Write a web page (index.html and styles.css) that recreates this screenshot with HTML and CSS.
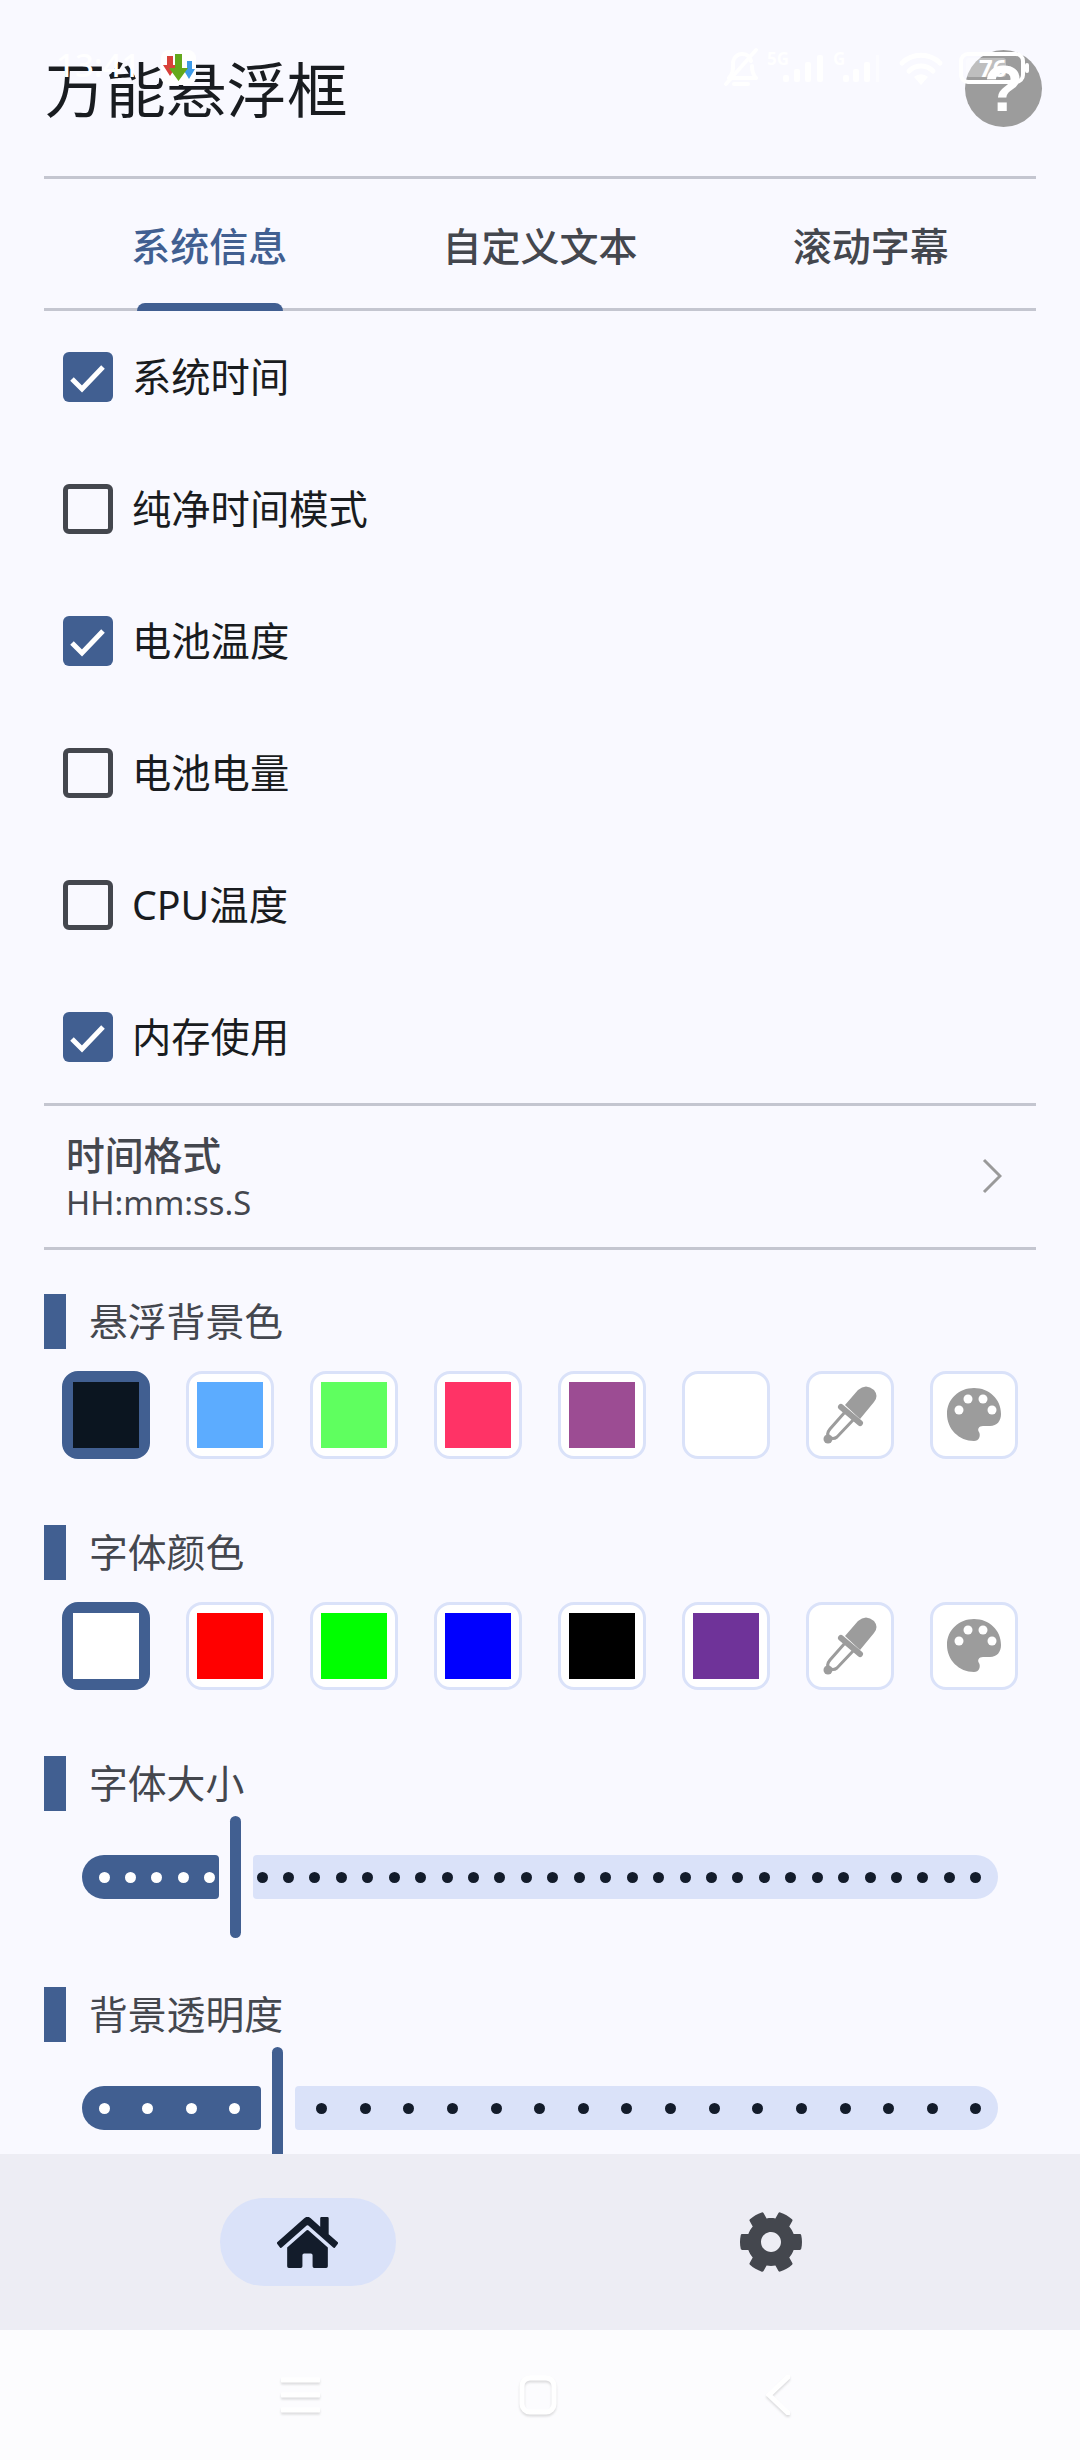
FILE: index.html
```html
<!DOCTYPE html>
<html lang="zh-CN">
<head>
  <meta charset="UTF-8">
  <meta name="viewport" content="width=device-width, initial-scale=1.0">
  <title>万能悬浮框</title>
  <link rel="stylesheet" href="styles.css">
</head>
<body>
  <div class="app">
    <!-- transparent system status bar, drawn over the app -->
    <div class="statusbar">
      <span class="status-time">13:41</span>
      <svg class="status-notif" viewBox="0 0 35 35">
        <rect width="35" height="35" rx="8" fill="#fff"/>
        <polygon points="6,6 12,6 12,15 16,15 9,26 2,15 6,15" fill="#d8423a"/>
        <polygon points="26,11 31,11 31,19 34,19 28,29 22,19 26,19" fill="#3d9be9"/>
        <polygon points="14,4 21,4 21,18 27,18 17.5,31 8,18 14,18" fill="#64a91c"/>
      </svg>
      <svg class="status-icons" viewBox="720 45 320 50">
        <g fill="none" stroke="#fff" stroke-width="4" stroke-linecap="round" stroke-linejoin="round">
          <path d="M729 78c4-4 4-8 4-14 0-6 4-10 9-10s8 3 9 7M752 66c0 6 1 9 4 12H729"/>
          <path d="M734 84h14M756 50l-30 34"/>
        </g>
        <g fill="#fff">
          <text class="status-net" x="767" y="65">5G</text>
          <rect x="783" y="75" width="6" height="7" rx="2"/>
          <rect x="794" y="69" width="6" height="13" rx="2"/>
          <rect x="805" y="62" width="6" height="20" rx="2"/>
          <rect x="817" y="55" width="6" height="27" rx="2"/>
          <text class="status-net" x="833" y="65">G</text>
          <rect x="843" y="75" width="6" height="7" rx="2"/>
          <rect x="853" y="69" width="6" height="13" rx="2"/>
          <rect x="864" y="62" width="6" height="20" rx="2"/>
          <rect x="876" y="55" width="3" height="27" opacity=".5"/>
          <path d="M921 85l-7-8a10 10 0 0 1 14 0z"/>
          <rect x="966" y="58" width="40" height="19" rx="3" opacity=".35"/>
          <rect x="1025" y="63" width="4" height="10" rx="2"/>
          <text class="status-batt" x="979" y="77">76</text>
        </g>
        <g fill="none" stroke="#fff" stroke-width="5" stroke-linecap="round">
          <path d="M902 63a27 27 0 0 1 38 0"/>
          <path d="M909 71a17 17 0 0 1 24 0"/>
        </g>
        <rect x="961" y="54" width="62" height="28" rx="7" fill="none" stroke="#fff" stroke-width="4"/>
      </svg>
    </div>

    <main class="content">
      <header class="topbar">
        <h1 class="title">万能悬浮框</h1>
        <button class="help">?</button>
      </header>

      <nav class="tabs">
        <div class="tab active">系统信息</div>
        <div class="tab">自定义文本</div>
        <div class="tab">滚动字幕</div>
      </nav>

      <div class="checks">
        <div class="check-row">
          <span class="box on"><svg viewBox="0 0 50 50"><path d="M9 27l10 10 21-22"/></svg></span>
          <span class="check-label">系统时间</span>
        </div>
        <div class="check-row">
          <span class="box"></span>
          <span class="check-label">纯净时间模式</span>
        </div>
        <div class="check-row">
          <span class="box on"><svg viewBox="0 0 50 50"><path d="M9 27l10 10 21-22"/></svg></span>
          <span class="check-label">电池温度</span>
        </div>
        <div class="check-row">
          <span class="box"></span>
          <span class="check-label">电池电量</span>
        </div>
        <div class="check-row">
          <span class="box"></span>
          <span class="check-label">CPU温度</span>
        </div>
        <div class="check-row">
          <span class="box on"><svg viewBox="0 0 50 50"><path d="M9 27l10 10 21-22"/></svg></span>
          <span class="check-label">内存使用</span>
        </div>
      </div>

      <div class="format-row">
        <div>
          <div class="format-name">时间格式</div>
          <div class="format-value">HH:mm:ss.S</div>
        </div>
        <svg class="chevron" viewBox="0 0 20 36"><path d="M2 2l16 16L2 34"/></svg>
      </div>

      <h2 class="section first">悬浮背景色</h2>
      <div class="swatches">
        <div class="swatch selected"><i class="c-ink"></i></div>
        <div class="swatch"><i class="c-sky"></i></div>
        <div class="swatch"><i class="c-mint"></i></div>
        <div class="swatch"><i class="c-rose"></i></div>
        <div class="swatch"><i class="c-plum"></i></div>
        <div class="swatch"><i class="c-white"></i></div>
        <div class="swatch">
          <svg class="tool-dropper" viewBox="0 0 54 58">
            <path class="solid" d="M22 19L35 4Q43-3 51 4Q56 10 51 16L37 33Z"/>
            <path class="collar" d="M18 21L37 37"/>
            <path class="tube" d="M22 26L7 43Q3 48 6 51Q10 54 14 51L31 33"/>
            <circle class="solid" cx="5" cy="53" r="4.5"/>
          </svg>
        </div>
        <div class="swatch">
          <svg class="tool-palette" viewBox="0 0 54 54">
            <path class="solid" d="M27 0C42 0 54 11 54 26C54 33 50 38 43 38H36C32 38 30 41 32 44C34 48 32 53 27 53C12 53 0 41 0 26C0 11 12 0 27 0Z"/>
            <circle class="hole" cx="12" cy="22" r="4.5"/>
            <circle class="hole" cx="21" cy="11" r="4.5"/>
            <circle class="hole" cx="36" cy="11" r="4.5"/>
            <circle class="hole" cx="45" cy="22" r="4.5"/>
          </svg>
        </div>
      </div>

      <h2 class="section">字体颜色</h2>
      <div class="swatches">
        <div class="swatch selected"><i class="c-white"></i></div>
        <div class="swatch"><i class="c-red"></i></div>
        <div class="swatch"><i class="c-lime"></i></div>
        <div class="swatch"><i class="c-blue"></i></div>
        <div class="swatch"><i class="c-black"></i></div>
        <div class="swatch"><i class="c-violet"></i></div>
        <div class="swatch">
          <svg class="tool-dropper" viewBox="0 0 54 58">
            <path class="solid" d="M22 19L35 4Q43-3 51 4Q56 10 51 16L37 33Z"/>
            <path class="collar" d="M18 21L37 37"/>
            <path class="tube" d="M22 26L7 43Q3 48 6 51Q10 54 14 51L31 33"/>
            <circle class="solid" cx="5" cy="53" r="4.5"/>
          </svg>
        </div>
        <div class="swatch">
          <svg class="tool-palette" viewBox="0 0 54 54">
            <path class="solid" d="M27 0C42 0 54 11 54 26C54 33 50 38 43 38H36C32 38 30 41 32 44C34 48 32 53 27 53C12 53 0 41 0 26C0 11 12 0 27 0Z"/>
            <circle class="hole" cx="12" cy="22" r="4.5"/>
            <circle class="hole" cx="21" cy="11" r="4.5"/>
            <circle class="hole" cx="36" cy="11" r="4.5"/>
            <circle class="hole" cx="45" cy="22" r="4.5"/>
          </svg>
        </div>
      </div>

      <h2 class="section">字体大小</h2>
      <div class="slider">
        <div class="track-on size-on">
          <b></b><b></b><b></b><b></b><b></b>
        </div>
        <div class="thumb"></div>
        <div class="track-off size-off">
          <b></b><b></b><b></b><b></b><b></b><b></b><b></b>
          <b></b><b></b><b></b><b></b><b></b><b></b><b></b>
          <b></b><b></b><b></b><b></b><b></b><b></b><b></b>
          <b></b><b></b><b></b><b></b><b></b><b></b><b></b>
        </div>
      </div>

      <h2 class="section after-slider">背景透明度</h2>
      <div class="slider">
        <div class="track-on alpha-on">
          <b></b><b></b><b></b><b></b>
        </div>
        <div class="thumb"></div>
        <div class="track-off alpha-off">
          <b></b><b></b><b></b><b></b><b></b><b></b><b></b><b></b>
          <b></b><b></b><b></b><b></b><b></b><b></b><b></b><b></b>
        </div>
      </div>
    </main>

    <nav class="bottomnav">
      <div class="nav-item">
        <div class="nav-pill">
          <svg class="nav-home" viewBox="0 32 576 448" preserveAspectRatio="none"><path d="M280.37 148.26L96 300.11V464a16 16 0 0 0 16 16l112.06-.29a16 16 0 0 0 15.92-16V368a16 16 0 0 1 16-16h64a16 16 0 0 1 16 16v95.64a16 16 0 0 0 16 16.05L464 480a16 16 0 0 0 16-16V300L295.67 148.26a12.19 12.19 0 0 0-15.3 0zM571.6 251.47L488 182.56V44.05a12 12 0 0 0-12-12h-56a12 12 0 0 0-12 12v72.61L318.47 43a48 48 0 0 0-61 0L4.34 251.47a12 12 0 0 0-1.6 16.9l25.5 31A12 12 0 0 0 45.15 301l235.22-193.74a12.19 12.19 0 0 1 15.3 0L530.9 301a12 12 0 0 0 16.9-1.6l25.5-31a12 12 0 0 0-1.7-16.93z"/></svg>
        </div>
      </div>
      <div class="nav-item">
        <svg class="nav-gear" viewBox="0 0 512 512"><path d="M487.4 315.7l-42.6-24.6c4.3-23.2 4.3-47 0-70.2l42.6-24.6c4.9-2.8 7.1-8.6 5.5-14-11.1-35.6-30-67.8-54.7-94.6-3.8-4.1-10-5.1-14.8-2.3L380.8 110c-17.9-15.4-38.5-27.3-60.8-35.1V25.8c0-5.6-3.9-10.5-9.4-11.7-36.7-8.2-74.3-7.8-109.2 0-5.5 1.2-9.4 6.1-9.4 11.7V75c-22.2 7.9-42.8 19.8-60.8 35.1L88.7 85.5c-4.9-2.8-11-1.9-14.8 2.3-24.7 26.7-43.6 58.9-54.7 94.6-1.7 5.4.6 11.2 5.5 14L67.3 221c-4.3 23.2-4.3 47 0 70.2l-42.6 24.6c-4.9 2.8-7.1 8.6-5.5 14 11.1 35.6 30 67.8 54.7 94.6 3.8 4.1 10 5.1 14.8 2.3l42.6-24.6c17.9 15.4 38.5 27.3 60.8 35.1v49.2c0 5.6 3.9 10.5 9.4 11.7 36.7 8.2 74.3 7.8 109.2 0 5.5-1.2 9.4-6.1 9.4-11.7v-49.2c22.2-7.9 42.8-19.8 60.8-35.1l42.6 24.6c4.9 2.8 11 1.9 14.8-2.3 24.7-26.7 43.6-58.9 54.7-94.6 1.5-5.5-.7-11.3-5.6-14.1zM256 336c-44.1 0-80-35.9-80-80s35.9-80 80-80 80 35.9 80 80-35.9 80-80 80z"/></svg>
      </div>
    </nav>

    <div class="sysnav">
      <svg class="sys-menu" viewBox="0 0 39 40"><path d="M1 5h37M1 20h37M1 35h37"/></svg>
      <svg class="sys-home" viewBox="0 0 38 40"><rect x="3" y="3" width="32" height="34" rx="8"/></svg>
      <svg class="sys-back" viewBox="0 0 24 40"><path d="M22 2L3 20l19 18"/></svg>
    </div>
  </div>
</body>
</html>
```

FILE: styles.css
```css
* {
  box-sizing: border-box;
}

body {
  margin: 0;
  background-color: #f9f9ff;
  font-family: "Noto Sans", "Noto Sans CJK SC", sans-serif;
  color: #191c20;
}

.app {
  position: relative;
  display: flex;
  flex-direction: column;
  width: 1080px;
  height: 2460px;
  overflow: hidden;
}

/* status bar */
.statusbar {
  position: absolute;
  top: 0;
  left: 0;
  z-index: 5;
  width: 100%;
  height: 100px;
}

.status-time {
  position: absolute;
  left: 56px;
  top: 46px;
  font-size: 33px;
  line-height: 38px;
  font-weight: 500;
  color: #fff;
}

.status-notif {
  position: absolute;
  left: 161px;
  top: 50px;
  width: 35px;
  height: 35px;
}

.status-icons {
  position: absolute;
  left: 720px;
  top: 45px;
  width: 320px;
  height: 50px;
}

.status-net {
  font-size: 17px;
  font-weight: 700;
}

.status-batt {
  font-size: 24px;
  font-weight: 700;
}

/* main column */
.content {
  flex: 1;
  min-height: 0;
  overflow: hidden;
  padding: 0 44px;
}

.topbar {
  display: flex;
  justify-content: space-between;
  align-items: center;
  height: 179px;
  border-bottom: 3px solid #c4c6d0;
}

.title {
  margin: 0 0 0 1px;
  padding-top: 4px;
  font-size: 60.5px;
  line-height: 80px;
  font-weight: 400;
}

.help {
  width: 77px;
  height: 77px;
  margin-right: -6px;
  padding: 2px 0 0;
  border: none;
  border-radius: 50%;
  background-color: #9c9c9c;
  color: #fff;
  font-family: "Liberation Sans", sans-serif;
  font-size: 64px;
  line-height: 70px;
  font-weight: 700;
}

.tabs {
  display: grid;
  grid-template-columns: repeat(3, 1fr);
  height: 132px;
  border-bottom: 3px solid #c4c6d0;
}

.tab {
  position: relative;
  display: flex;
  justify-content: center;
  align-items: center;
  font-size: 39px;
  font-weight: 500;
  color: #44474e;
}

.tab.active {
  color: #415f91;
}

.tab.active::after {
  content: "";
  position: absolute;
  bottom: -3px;
  left: 93px;
  width: 146px;
  height: 8px;
  border-radius: 8px 8px 0 0;
  background-color: #415f91;
}

.checks {
  border-bottom: 3px solid #c4c6d0;
}

.check-row {
  display: flex;
  align-items: center;
  height: 132px;
  padding-left: 19px;
}

.box {
  width: 50px;
  height: 50px;
  margin-right: 19px;
  border: 5px solid #44474e;
  border-radius: 6px;
}

.box.on {
  border: none;
  background-color: #415f91;
}

.box svg {
  display: block;
  width: 50px;
  height: 50px;
  fill: none;
  stroke: #fff;
  stroke-width: 5;
}

.check-label {
  font-size: 39.3px;
  line-height: 50px;
}

.format-row {
  display: flex;
  justify-content: space-between;
  align-items: center;
  height: 144px;
  padding: 0 34px 2px 22px;
  border-bottom: 3px solid #c4c6d0;
}

.format-name {
  font-size: 38.8px;
  line-height: 50px;
  font-weight: 500;
  color: #44474e;
}

.format-value {
  margin-top: 4px;
  font-size: 32.7px;
  line-height: 38px;
  color: #44474e;
}

.chevron {
  width: 20px;
  height: 36px;
  fill: none;
  stroke: #9a9a9a;
  stroke-width: 3;
}

/* section headings */
.section {
  height: 55px;
  margin: 0;
  padding-left: 23px;
  border-left: 22px solid #415f91;
  font-size: 38.8px;
  line-height: 55px;
  font-weight: 400;
  color: #44474e;
}

.section.first {
  margin-top: 44px;
}

.swatches {
  display: flex;
  gap: 36px;
  margin: 22px 0 66px 18px;
}

.swatch {
  display: flex;
  justify-content: center;
  align-items: center;
  width: 88px;
  height: 88px;
  border: 3px solid #dae2f9;
  border-radius: 16px;
  background-color: #fff;
}

.swatch.selected {
  border: 11px solid #415f91;
}

.swatch i {
  display: block;
  width: 66px;
  height: 66px;
}

.c-ink { background-color: #0b1520; }
.c-sky { background-color: #5cacff; }
.c-mint { background-color: #5fff5f; }
.c-rose { background-color: #ff3366; }
.c-plum { background-color: #9c4c93; }
.c-white { background-color: #fff; }
.c-red { background-color: #ff0000; }
.c-lime { background-color: #00ff00; }
.c-blue { background-color: #0000ff; }
.c-black { background-color: #000; }
.c-violet { background-color: #6f3399; }

.tool-dropper {
  width: 54px;
  height: 58px;
  overflow: visible;
}

.tool-palette {
  width: 54px;
  height: 54px;
}

.solid {
  fill: #9c9c9c;
}

.hole {
  fill: #fff;
}

.collar {
  fill: none;
  stroke: #9c9c9c;
  stroke-width: 6;
  stroke-linecap: round;
}

.tube {
  fill: none;
  stroke: #9c9c9c;
  stroke-width: 3;
}

/* sliders */
.slider {
  display: flex;
  align-items: center;
  height: 122px;
  margin: 5px 0 0 38px;
  width: 916px;
}

.track-on,
.track-off {
  display: flex;
  align-items: center;
  height: 44px;
}

.track-on {
  justify-content: space-between;
  padding: 0 4px 0 16.5px;
  border-radius: 22px 4px 4px 22px;
  background-color: #415f91;
}

.track-on b,
.track-off b {
  width: 11px;
  height: 11px;
  border-radius: 50%;
}

.track-on b {
  background-color: #fff;
}

.track-off {
  flex: 1;
  justify-content: space-between;
  border-radius: 4px 22px 22px 4px;
  background-color: #dae2f9;
}

.track-off b {
  background-color: #131c2b;
}

.thumb {
  flex: none;
  width: 11px;
  height: 122px;
  margin: 0 12px 0 11px;
  border-radius: 6px;
  background-color: #415f91;
}

.size-on {
  width: 137px;
}

.size-off {
  padding: 0 16.5px 0 3.5px;
}

.alpha-on {
  width: 179px;
  padding-right: 20.7px;
}

.alpha-off {
  padding: 0 16.5px 0 21px;
}

.after-slider {
  margin-top: 49px;
}

/* bottom navigation */
.bottomnav {
  display: flex;
  flex: none;
  height: 176px;
  padding: 0 78px 0 76px;
  background-color: #ededf4;
}

.nav-item {
  display: flex;
  flex: 1;
  justify-content: center;
  align-items: center;
}

.nav-pill {
  display: flex;
  justify-content: center;
  align-items: center;
  width: 176px;
  height: 88px;
  border-radius: 44px;
  background-color: #dae2f9;
}

.nav-home {
  width: 61px;
  height: 51px;
  fill: #131c2b;
}

.nav-gear {
  width: 64px;
  height: 64px;
  fill: #44474e;
  transform: rotate(90deg);
}

/* system navigation bar */
.sysnav {
  display: flex;
  flex: none;
  align-items: center;
  height: 130px;
  padding-left: 281px;
  background-color: #fcfcfe;
}

.sysnav svg {
  fill: none;
  stroke: #fff;
  stroke-width: 5;
  stroke-linecap: round;
  filter: drop-shadow(0 2px 1px rgba(0, 0, 0, 0.13));
}

.sys-menu {
  width: 39px;
  height: 40px;
  margin-right: 199px;
}

.sys-home {
  width: 38px;
  height: 40px;
  margin-right: 209px;
}

.sys-back {
  width: 24px;
  height: 40px;
}
```
